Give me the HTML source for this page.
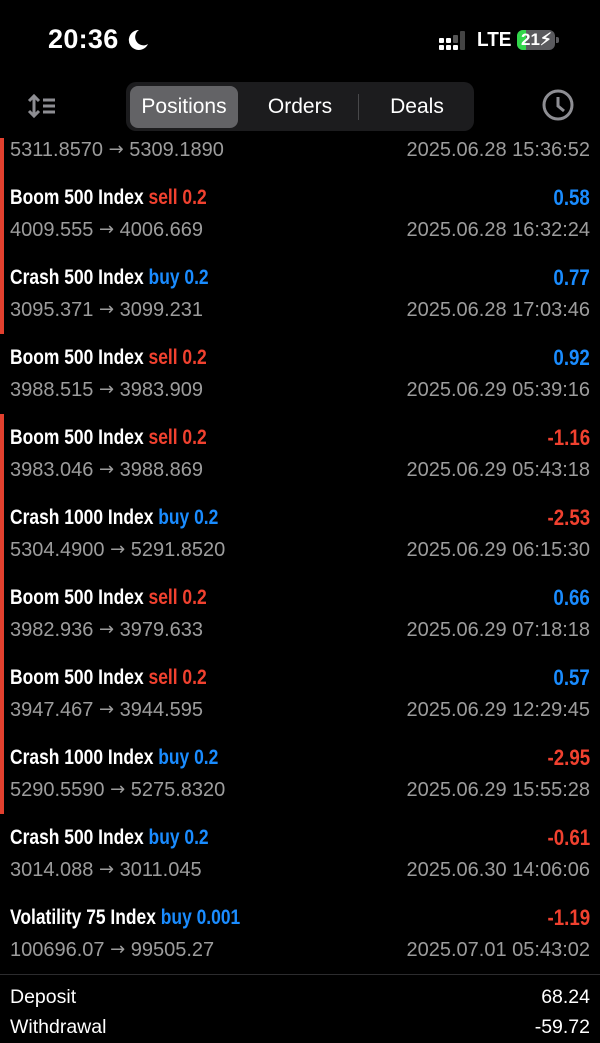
<!DOCTYPE html>
<html><head><meta charset="utf-8"><style>
*{margin:0;padding:0;box-sizing:border-box}
body{width:600px;height:1043px;background:#000;position:relative;overflow:hidden;font-family:"Liberation Sans",sans-serif;color:#fff}
.abs{position:absolute}
.t{position:absolute;left:10px;font-weight:bold;font-size:21px;white-space:nowrap;transform:scaleX(0.83);transform-origin:left center;line-height:24px}
.p{position:absolute;right:10px;font-weight:bold;font-size:22px;white-space:nowrap;transform:scaleX(0.85);transform-origin:right center;line-height:24px}
.s{position:absolute;left:10px;font-size:20px;color:#9c9c9c;white-space:nowrap;line-height:22px}
.d{position:absolute;right:10px;font-size:20px;color:#9c9c9c;white-space:nowrap;line-height:22px}
.a{font-family:"DejaVu Sans",sans-serif;font-size:18px;position:relative;top:-1px}
.r{color:#f0412f}.b{color:#1a8cff}
.bar{position:absolute;left:0;width:4px;background:#e2402e}
</style></head><body>
<div class="abs" style="left:48px;top:24px;font-size:27px;font-weight:bold;letter-spacing:0.3px">20:36</div>
<svg class="abs" style="left:126px;top:28px" width="24" height="24" viewBox="0 0 24 24"><path d="M13 2A10 10 0 1 0 22 16 8 8 0 1 1 13 2Z" fill="#fff"/></svg>
<svg class="abs" style="left:438px;top:30px" width="32" height="22"><g fill="#fff"><rect x="1" y="8" width="5" height="5" rx="1"/><rect x="1" y="15" width="5" height="5" rx="1"/><rect x="8" y="8" width="5" height="5" rx="1"/><rect x="8" y="15" width="5" height="5" rx="1"/><rect x="15" y="15" width="5" height="5" rx="1"/></g><rect x="15" y="5" width="5" height="8" rx="1" fill="#555"/><rect x="22" y="1" width="5" height="19" rx="1" fill="#444"/></svg>
<div class="abs" style="left:477px;top:29px;font-size:20px;font-weight:bold;transform:scaleX(0.95);transform-origin:left">LTE</div>
<div class="abs" style="left:517px;top:30px;width:38px;height:20px;border-radius:6px;background:#5a5a5e;overflow:hidden"><div style="width:9px;height:20px;background:#32d74b"></div><div class="abs" style="left:4px;top:0;font-size:17px;font-weight:bold;line-height:20px">21⚡︎</div></div>
<div class="abs" style="left:556px;top:37px;width:3px;height:6px;background:#5a5a5e;border-radius:0 2px 2px 0"></div>
<svg class="abs" style="left:26px;top:93px" width="32" height="26" viewBox="0 0 32 26"><path d="M8 3V23M3 8L8 3 13 8M3 18L8 23 13 18" stroke="#8e8e93" stroke-width="3" fill="none"/><path d="M17 7H29M17 13H29M17 19H29" stroke="#8e8e93" stroke-width="3"/></svg>
<div class="abs" style="left:126px;top:82px;width:348px;height:49px;border-radius:10px;background:#1c1c1e"></div>
<div class="abs" style="left:130px;top:86px;width:108px;height:42px;border-radius:8px;background:#636366"></div>
<div class="abs" style="left:358px;top:94px;width:1px;height:26px;background:#48484a"></div>
<div class="abs" style="left:130px;top:95px;width:108px;text-align:center;font-size:21px">Positions</div>
<div class="abs" style="left:242px;top:95px;width:116px;text-align:center;font-size:21px">Orders</div>
<div class="abs" style="left:360px;top:95px;width:114px;text-align:center;font-size:21px">Deals</div>
<svg class="abs" style="left:542px;top:89px" width="32" height="32"><circle cx="16" cy="16" r="14" stroke="#8e8e93" stroke-width="3" fill="none"/><path d="M16 8V17L22 22" stroke="#8e8e93" stroke-width="3" fill="none"/></svg>

<div class="bar" style="top:138px;height:196px"></div>
<div class="bar" style="top:414px;height:400px"></div>

<div class="s" style="top:139px">5311.8570 <span class="a">→</span> 5309.1890</div><div class="d" style="top:139px">2025.06.28 15:36:52</div>

<div class="t" style="top:186px">Boom 500 Index <span class="r">sell 0.2</span></div><div class="p b" style="top:186px">0.58</div>
<div class="s" style="top:219px">4009.555 <span class="a">→</span> 4006.669</div><div class="d" style="top:219px">2025.06.28 16:32:24</div>

<div class="t" style="top:266px">Crash 500 Index <span class="b">buy 0.2</span></div><div class="p b" style="top:266px">0.77</div>
<div class="s" style="top:299px">3095.371 <span class="a">→</span> 3099.231</div><div class="d" style="top:299px">2025.06.28 17:03:46</div>

<div class="t" style="top:346px">Boom 500 Index <span class="r">sell 0.2</span></div><div class="p b" style="top:346px">0.92</div>
<div class="s" style="top:379px">3988.515 <span class="a">→</span> 3983.909</div><div class="d" style="top:379px">2025.06.29 05:39:16</div>

<div class="t" style="top:426px">Boom 500 Index <span class="r">sell 0.2</span></div><div class="p r" style="top:426px">-1.16</div>
<div class="s" style="top:459px">3983.046 <span class="a">→</span> 3988.869</div><div class="d" style="top:459px">2025.06.29 05:43:18</div>

<div class="t" style="top:506px">Crash 1000 Index <span class="b">buy 0.2</span></div><div class="p r" style="top:506px">-2.53</div>
<div class="s" style="top:539px">5304.4900 <span class="a">→</span> 5291.8520</div><div class="d" style="top:539px">2025.06.29 06:15:30</div>

<div class="t" style="top:586px">Boom 500 Index <span class="r">sell 0.2</span></div><div class="p b" style="top:586px">0.66</div>
<div class="s" style="top:619px">3982.936 <span class="a">→</span> 3979.633</div><div class="d" style="top:619px">2025.06.29 07:18:18</div>

<div class="t" style="top:666px">Boom 500 Index <span class="r">sell 0.2</span></div><div class="p b" style="top:666px">0.57</div>
<div class="s" style="top:699px">3947.467 <span class="a">→</span> 3944.595</div><div class="d" style="top:699px">2025.06.29 12:29:45</div>

<div class="t" style="top:746px">Crash 1000 Index <span class="b">buy 0.2</span></div><div class="p r" style="top:746px">-2.95</div>
<div class="s" style="top:779px">5290.5590 <span class="a">→</span> 5275.8320</div><div class="d" style="top:779px">2025.06.29 15:55:28</div>

<div class="t" style="top:826px">Crash 500 Index <span class="b">buy 0.2</span></div><div class="p r" style="top:826px">-0.61</div>
<div class="s" style="top:859px">3014.088 <span class="a">→</span> 3011.045</div><div class="d" style="top:859px">2025.06.30 14:06:06</div>

<div class="t" style="top:906px">Volatility 75 Index <span class="b">buy 0.001</span></div><div class="p r" style="top:906px">-1.19</div>
<div class="s" style="top:939px">100696.07 <span class="a">→</span> 99505.27</div><div class="d" style="top:939px">2025.07.01 05:43:02</div>

<div class="abs" style="left:0;top:974px;width:600px;height:1px;background:#2c2c2e"></div>
<div class="abs" style="left:10px;top:986px;font-size:19.5px;line-height:22px">Deposit</div>
<div class="abs" style="right:10px;top:986px;font-size:19.5px;line-height:22px">68.24</div>
<div class="abs" style="left:10px;top:1016px;font-size:19.5px;line-height:22px">Withdrawal</div>
<div class="abs" style="right:10px;top:1016px;font-size:19.5px;line-height:22px">-59.72</div>
</body></html>
